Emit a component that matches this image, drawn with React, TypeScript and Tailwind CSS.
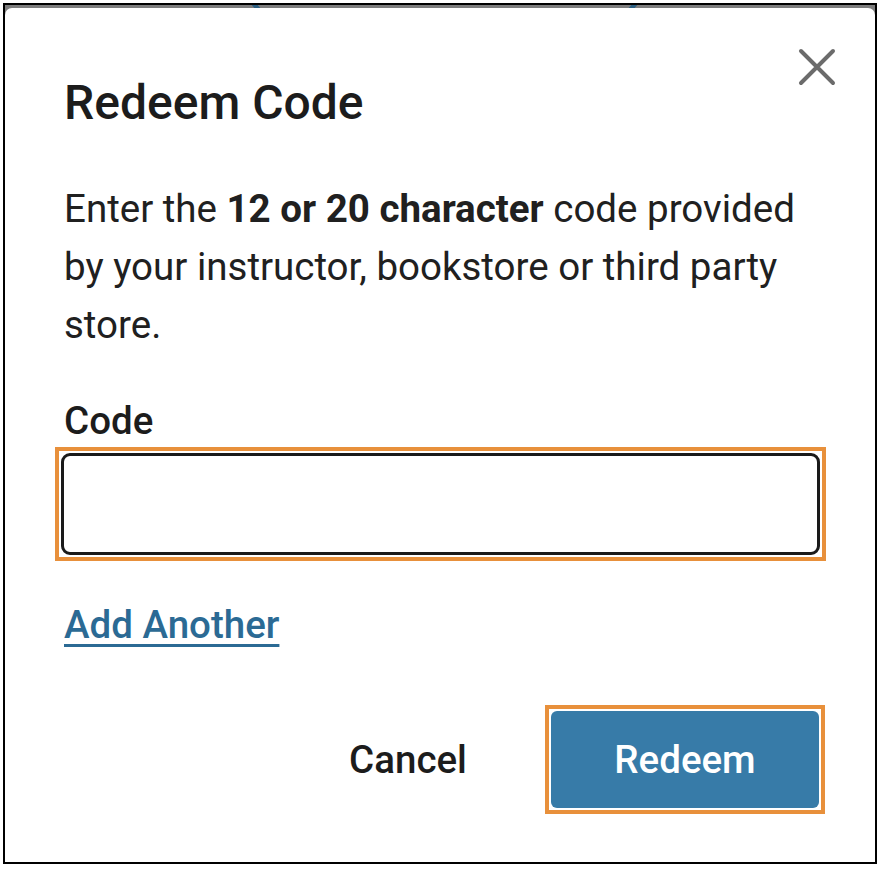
import React from "react";

export default function App() {
  return (
    <div
      className="relative w-[884px] h-[872px] bg-white"
      style={{ fontFamily: "Roboto, 'Noto Sans', sans-serif" }}
    >
      <div className="absolute left-[3px] top-[3px] w-[874px] h-[861px] border-2 border-black bg-[#7d7d7d] pt-[3px] flex flex-col">
        <span className="absolute left-[248px] top-0 w-[6px] h-[3px] bg-[#2c5f82] skew-x-[40deg]" />
        <span className="absolute left-[625px] top-0 w-[6px] h-[3px] bg-[#2c5f82] -skew-x-[40deg]" />
        <div className="relative flex-1 bg-white rounded-t-[7px] flex flex-col pl-[59px] pr-[49px]">
          <button className="absolute left-[790px] top-[37px] w-[44px] h-[44px] flex items-center justify-center">
            <svg width="38" height="38" viewBox="0 0 38 38">
              <path d="M3 3 L35 35 M35 3 L3 35" stroke="#6b6b6b" strokeWidth="4" strokeLinecap="round" fill="none" />
            </svg>
          </button>
          <h1 className="mt-[71px] text-[48px] leading-[48px] font-medium text-[#1c1c1c]">Redeem Code</h1>
          <p className="mt-[53px] text-[38.5px] leading-[58px] text-[#202020] pr-[20px]">
            Enter the <span className="font-bold">12 or 20 character</span> code provided by your instructor, bookstore or third party store.
          </p>
          <label className="mt-[47px] text-[38.5px] leading-[40px] font-medium text-[#1c1c1c]">Code</label>
          <div className="mt-[6px] ml-[-9px] border-4 border-[#e8903b] p-[2px]">
            <input className="block w-full h-[102px] border-[3px] border-[#1a1a1a] rounded-[9px] bg-white outline-none px-4 text-[32px]" />
          </div>
          <div className="mt-[44px]">
            <a href="#" className="text-[38.5px] leading-[40px] font-medium text-[#2b6a94] underline underline-offset-[6px] decoration-[3px]">
              Add Another
            </a>
          </div>
          <div className="mt-[60px] flex justify-end items-center">
            <button className="w-[150px] h-[105px] text-[38.5px] font-medium text-[#1c1c1c]">Cancel</button>
            <div className="ml-[62px] mr-[1px] border-4 border-[#e8903b] p-[2px]">
              <button className="w-[268px] h-[97px] bg-[#377ba8] rounded-[6px] text-white text-[38.5px] font-medium">Redeem</button>
            </div>
          </div>
        </div>
      </div>
    </div>
  );
}
